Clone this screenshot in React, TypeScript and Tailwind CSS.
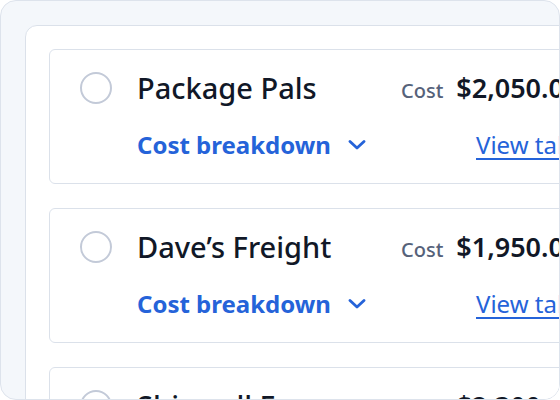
import React from "react";

type Quote = {
    carrier: string;
    cost: string;
};

const quotes: Quote[] = [
    { carrier: "Package Pals", cost: "$2,050.00" },
    { carrier: "Dave’s Freight", cost: "$1,950.00" },
    { carrier: "Shipwell Express", cost: "$2,300.00" },
];

const Chevron = () => (
    <svg width="18" height="10" viewBox="0 0 18 10" fill="none" className="ml-[17px]">
        <path d="M2 1.5L9 8L16 1.5" stroke="#2563d9" strokeWidth="2.8" strokeLinecap="round" strokeLinejoin="round" />
    </svg>
);

const QuoteCard = ({ carrier, cost }: Quote) => {
    return (
        <div className="w-[560px] h-[135px] shrink-0 rounded-md border border-[#dbe1ea] bg-white pl-[30px] pt-[22px]">
            <div className="grid grid-cols-[321px_auto] grid-rows-[32px_32px] gap-y-[25px] w-max">
                <div className="flex items-center gap-[25px]">
                    <span className="w-8 h-8 rounded-full border-2 border-[#c3cad8] bg-white" />
                    <span className="text-[29px] leading-8 font-medium text-[#111827] whitespace-nowrap">{carrier}</span>
                </div>
                <div className="flex items-baseline gap-[13px] self-center">
                    <span className="text-[20px] font-medium text-[#56627a]">Cost</span>
                    <span className="text-[27px] font-semibold text-[#111827] whitespace-nowrap">{cost}</span>
                </div>
                <button type="button" className="flex items-center pl-[57px] text-[24px] leading-8 font-bold text-[#2563d9] whitespace-nowrap">
                    Cost breakdown
                    <Chevron />
                </button>
                <a className="justify-self-start ml-[75px] text-[24px] leading-8 text-[#2563d9] underline underline-offset-[4px] decoration-[1.5px] whitespace-nowrap">View table</a>
            </div>
        </div>
    );
};

export default function App() {
    return (
        <div className="w-[560px] h-[400px] bg-white font-['Noto_Sans',sans-serif]">
            <div className="w-[560px] h-[400px] rounded-2xl border border-[#dde3ec] bg-[#f4f7fb] pt-6 pl-6 overflow-hidden">
                <div className="w-[700px] h-[600px] rounded-tl-xl border border-[#dbe1ea] bg-white pt-[23px] pl-[23px]">
                    <div className="flex flex-col gap-[24px]">
                        {quotes.map((q) => (
                            <QuoteCard key={q.carrier} {...q} />
                        ))}
                    </div>
                </div>
            </div>
        </div>
    );
}
